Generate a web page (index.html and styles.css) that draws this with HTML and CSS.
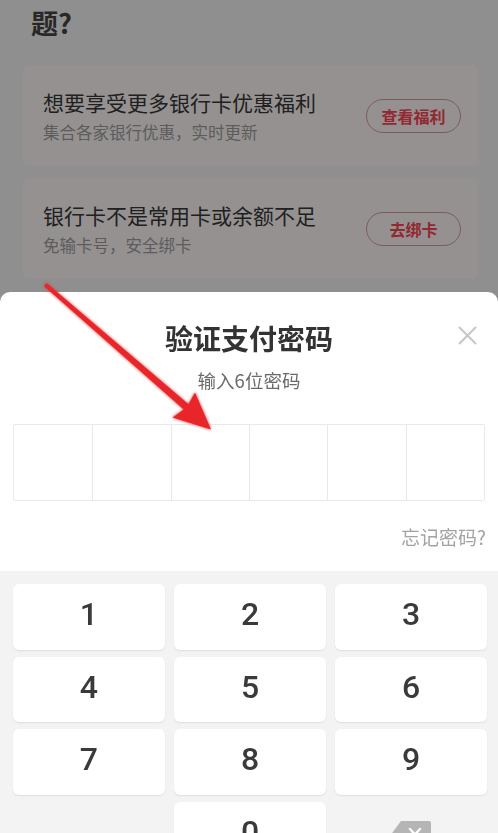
FILE: index.html
```html
<!DOCTYPE html>
<html lang="zh-CN">
<head>
<meta charset="utf-8">
<title>验证支付密码</title>
<link rel="stylesheet" href="styles.css">
</head>
<body>
<main class="page">
  <h1 class="page-title">支付时，您是否遇到了以下的这些问题?</h1>
  <section class="tip-card">
    <div class="tip-text">
      <div class="tip-title">想要享受更多银行卡优惠福利</div>
      <div class="tip-sub">集合各家银行优惠，实时更新</div>
    </div>
    <span class="tip-btn">查看福利</span>
  </section>
  <section class="tip-card">
    <div class="tip-text">
      <div class="tip-title">银行卡不是常用卡或余额不足</div>
      <div class="tip-sub">免输卡号，安全绑卡</div>
    </div>
    <span class="tip-btn">去绑卡</span>
  </section>
</main>

<div class="mask"></div>

<section class="sheet">
  <header class="sheet-head">
    <h2 class="sheet-title">验证支付密码</h2>
    <span class="sheet-close">
      <svg width="19" height="19" viewBox="0 0 19 19"><path d="M1.5 1.5 L17.5 17.5 M17.5 1.5 L1.5 17.5" stroke="#c6c6c6" stroke-width="2" stroke-linecap="round" fill="none"/></svg>
    </span>
  </header>
  <p class="sheet-sub">输入6位密码</p>
  <div class="pwd">
    <span class="pwd-cell"></span>
    <span class="pwd-cell"></span>
    <span class="pwd-cell"></span>
    <span class="pwd-cell"></span>
    <span class="pwd-cell"></span>
    <span class="pwd-cell"></span>
  </div>
  <div class="forgot-row"><span class="forgot">忘记密码?</span></div>
  <div class="keypad">
    <div class="key">1</div>
    <div class="key">2</div>
    <div class="key">3</div>
    <div class="key">4</div>
    <div class="key">5</div>
    <div class="key">6</div>
    <div class="key">7</div>
    <div class="key">8</div>
    <div class="key">9</div>
    <div class="key key-blank"></div>
    <div class="key">0</div>
    <div class="key key-blank key-del">
      <svg width="40" height="27" viewBox="0 0 40 27"><path d="M10 0 H38 a2 2 0 0 1 2 2 V25 a2 2 0 0 1 -2 2 H10 L0 13.5 Z" fill="#b5b5b5"/><path d="M19 8 L29 19 M29 8 L19 19" stroke="#fff" stroke-width="2.4" stroke-linecap="round"/></svg>
    </div>
  </div>
</section>

<svg class="arrow" width="498" height="833" viewBox="0 0 498 833">
  <defs>
    <filter id="soft" x="-20%" y="-20%" width="140%" height="140%">
      <feGaussianBlur in="SourceGraphic" stdDeviation="1.6" result="b"/>
      <feMerge><feMergeNode in="b"/><feMergeNode in="SourceGraphic"/></feMerge>
    </filter>
  </defs>
  <polygon filter="url(#soft)" fill="#e8262b" points="45.2,284.6 46.8,283.2 188.5,404.2 195,392.5 211,429.5 172.5,417.5 183.8,409.4 44.2,286.2"/>
</svg>
</body>
</html>
```

FILE: styles.css
```css
html, body {
  margin: 0;
  padding: 0;
  height: 100%;
  overflow: hidden;
}

body {
  background: #eeeeee;
  font-family: "Noto Sans CJK SC", "Noto Sans", Roboto, sans-serif;
  color: #333;
}

.page {
  padding: 0 20px 0 23px;
}

.page-title {
  margin: -40px 0 0;
  padding: 0 8px;
  font-size: 27px;
  line-height: 42px;
  font-weight: 700;
  color: #444;
}

.tip-card {
  display: flex;
  align-items: center;
  height: 101px;
  box-sizing: border-box;
  padding: 0 17px 0 20px;
  background: #f8f2f2;
  border-radius: 6px;
  margin-top: 21px;
}

.tip-card + .tip-card {
  margin-top: 12px;
}

.tip-text {
  flex: 1;
  display: flex;
  flex-direction: column;
  gap: 4px;
}

.tip-title {
  font-size: 21px;
  line-height: 28px;
  color: #363636;
}

.tip-sub {
  font-size: 16.5px;
  line-height: 24px;
  color: #9a9a9a;
}

.tip-btn {
  width: 95px;
  height: 34px;
  box-sizing: border-box;
  border: 1px solid #cf9a9a;
  border-radius: 17px;
  display: flex;
  align-items: center;
  justify-content: center;
  font-size: 16px;
  font-weight: 700;
  color: #f44352;
}

.mask {
  position: fixed;
  inset: 0;
  background: rgba(0, 0, 0, 0.4);
}

.sheet {
  position: fixed;
  top: 292px;
  left: 0;
  right: 0;
  bottom: 0;
  background: #fff;
  border-radius: 10px 10px 0 0;
  overflow: hidden;
  display: flex;
  flex-direction: column;
}

.sheet > * {
  flex-shrink: 0;
}

.sheet-head {
  position: relative;
  padding-top: 28px;
  text-align: center;
}

.sheet-title {
  margin: 0;
  font-size: 28px;
  line-height: 36px;
  font-weight: 700;
  color: #333;
}

.sheet-close {
  position: absolute;
  top: 34px;
  right: 21px;
  width: 19px;
  height: 19px;
  display: flex;
}

.sheet-sub {
  margin: 11px 0 0;
  text-align: center;
  font-size: 18.5px;
  line-height: 26px;
  color: #6a6a6a;
}

.pwd {
  margin: 31px 13px 0;
  height: 77px;
  box-sizing: border-box;
  border: 1.5px solid #e9e9e9;
  border-radius: 2px;
  display: grid;
  grid-template-columns: repeat(6, 1fr);
}

.pwd-cell + .pwd-cell {
  border-left: 1.5px solid #e9e9e9;
}

.forgot-row {
  margin: 23px 12px 0;
  display: flex;
  justify-content: flex-end;
}

.forgot {
  font-size: 19px;
  line-height: 26px;
  color: #a3a3a3;
}

.keypad {
  margin-top: 21px;
  flex: 1 0 auto;
  background: #f3f3f3;
  padding: 13px 11px 20px 13px;
  display: grid;
  grid-template-columns: repeat(3, 1fr);
  grid-auto-rows: 65.5px;
  column-gap: 9.5px;
  row-gap: 7px;
}

.key {
  background: #fff;
  border-radius: 6px;
  box-shadow: 0 1px 1.5px rgba(0, 0, 0, 0.09);
  display: flex;
  align-items: center;
  justify-content: center;
  font-family: Roboto, "Noto Sans", sans-serif;
  font-size: 32px;
  font-weight: 500;
  color: #3a3a3a;
  padding-bottom: 5px;
  box-sizing: border-box;
}

.key-blank {
  background: transparent;
  box-shadow: none;
}

.key-del {
  padding-bottom: 0;
}

.arrow {
  position: fixed;
  top: 0;
  left: 0;
  pointer-events: none;
}
```
